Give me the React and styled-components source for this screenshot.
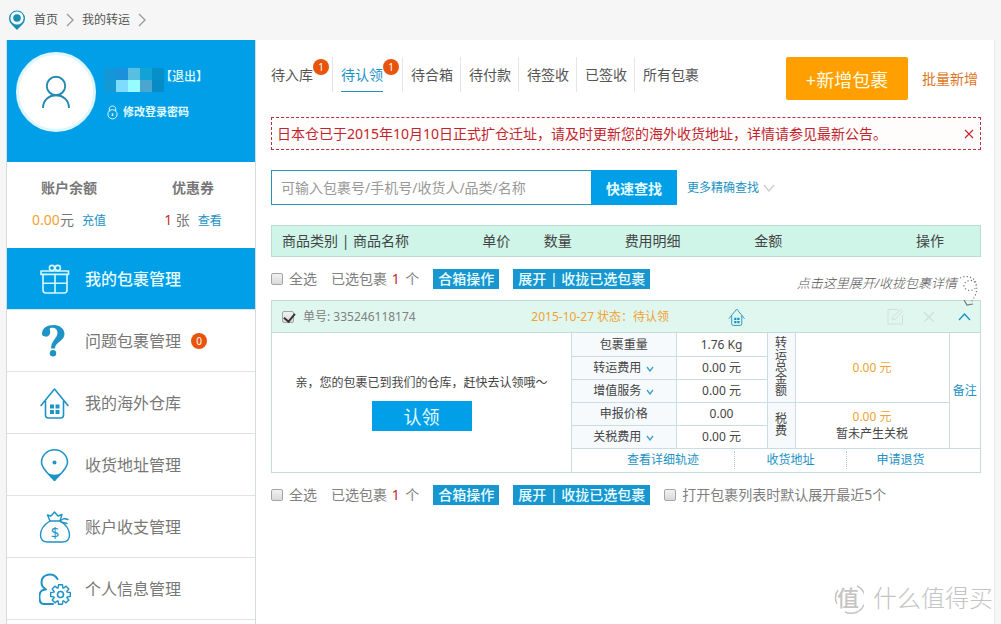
import React, { useState } from 'react';
import styled, { createGlobalStyle, css } from 'styled-components';

const GlobalStyle = createGlobalStyle`
    * {
        box-sizing: border-box;
    }
    body {
        margin: 0;
        background: #f6f6f6;
        color: #444;
        font-family: "Noto Sans", "Noto Sans CJK SC", sans-serif;
        font-size: 14px;
        line-height: 20px;
    }
    button, input {
        font-family: inherit;
        margin: 0;
    }
    a {
        text-decoration: none;
        color: inherit;
    }
    table {
        border-collapse: collapse;
        table-layout: fixed;
        width: 100%;
    }
`;

const Page = styled.div`
    min-height: 100vh;
    display: flex;
    flex-direction: column;
    padding: 0 6px;
`;

const Breadcrumb = styled.nav`
    height: 40px;
    display: flex;
    align-items: center;
    gap: 8px;
    font-size: 12px;
    color: #555;
    padding-left: 2px;
`;

const Columns = styled.div`
    flex: 1;
    display: flex;
`;

const Sidebar = styled.aside`
    flex: 0 0 250px;
    background: white;
    border: 1px solid #d5dadd;
    border-top: none;
    border-bottom: none;
`;

const Profile = styled.div`
    height: 122px;
    background: #019fe8;
    color: #e2fbff;
    display: flex;
    align-items: flex-start;
    gap: 8px;
    padding: 12px 9px;
`;

const Avatar = styled.div`
    flex: none;
    width: 80px;
    height: 80px;
    border-radius: 50%;
    border: 3px solid #ddf6fd;
    background: white;
    display: flex;
    align-items: center;
    justify-content: center;
`;

const ProfileInfo = styled.div`
    padding-top: 16px;
    font-size: 12px;
    font-weight: 500;
    white-space: nowrap;
    .name {
        display: flex;
        align-items: center;
        height: 24px;
    }
    .password {
        display: flex;
        align-items: center;
        gap: 5px;
        margin-top: 10px;
        padding-left: 3px;
        font-size: 11px;
        font-weight: bold;
    }
    .name a {
        margin-left: -4px;
        margin-top: -6px;
    }
`;

const Account = styled.div`
    height: 86px;
    display: grid;
    grid-template-columns: 1fr 1fr;
    padding-top: 16px;
    text-align: center;
    color: #777;
    h3 {
        margin: 0 0 12px;
        font-size: 14px;
        line-height: 20px;
    }
    a {
        margin-left: 8px;
        font-size: 12px;
        color: #1b92c4;
    }
`;

const Money = styled.span`
    color: #f0a232;
`;

const Red = styled.span`
    color: #c42a2a;
`;

const MenuItem = styled.a`
    height: 62px;
    display: flex;
    align-items: center;
    padding-left: 32px;
    font-size: 16px;
    color: #777;
    border-bottom: 1px solid #dfe3e5;
    svg {
        width: 32px;
        height: 32px;
        margin-right: 14px;
        color: #1e93c6;
    }
    ${({ $active }) => $active && css`
        background: #019fe8;
        color: #e6fcff;
        font-weight: 500;
        svg {
            color: #d8f8ff;
        }
    `}
`;

const Badge = styled.span`
    width: 16px;
    height: 16px;
    border-radius: 50%;
    background: #e8540c;
    color: white;
    font-size: 10px;
    line-height: 16px;
    font-weight: 400;
    text-align: center;
`;

const MenuBadge = styled(Badge)`
    margin-left: 10px;
`;

const Main = styled.main`
    flex: 1;
    min-width: 0;
    background: white;
    border-right: 1px solid #ececec;
    padding: 17px 13px 0 15px;
`;

const TopBar = styled.div`
    display: flex;
    align-items: flex-start;
    justify-content: space-between;
    height: 60px;
`;

const Tabs = styled.nav`
    display: flex;
`;

const Tab = styled.a`
    position: relative;
    height: 35px;
    padding: 0 7px 0 8px;
    border-right: 1px solid #e3e6e8;
    white-space: nowrap;
    color: #555;
    span.text {
        display: block;
        height: 35px;
        line-height: 36px;
        border-bottom: 1px solid transparent;
    }
    &:first-child {
        padding-left: 0;
    }
    &:last-child {
        border-right: none;
    }
    ${({ $count }) => $count && css`
        padding-right: 19px;
    `}
    ${({ $active }) => $active && css`
        color: #1b92c4;
        span.text {
            border-color: #1b92c4;
        }
    `}
    ${Badge} {
        position: absolute;
        top: 2px;
        right: 3px;
    }
`;

const AddArea = styled.div`
    display: flex;
    align-items: center;
    gap: 14px;
    padding-right: 3px;
    white-space: nowrap;
    a {
        color: #dd7526;
    }
`;

const AddButton = styled.button`
    width: 122px;
    height: 43px;
    padding: 0;
    border: none;
    border-radius: 2px;
    background: #ff9f00;
    color: #fffbe0;
    font-size: 18px;
    cursor: pointer;
`;

const Notice = styled.div`
    height: 33px;
    display: flex;
    align-items: center;
    justify-content: space-between;
    padding: 0 6px 0 5px;
    border: 1px dashed #b8323e;
    background: #fffcfc;
    color: #c1242c;
    button {
        display: flex;
        padding: 0;
        border: none;
        background: none;
        color: inherit;
        cursor: pointer;
    }
`;

const Search = styled.form`
    display: flex;
    align-items: center;
    margin: 20px 0;
    a {
        display: flex;
        align-items: center;
        gap: 4px;
        margin-left: 10px;
        font-size: 12px;
        color: #1b92c4;
    }
`;

const SearchInput = styled.input`
    flex: 0 1 320px;
    min-width: 0;
    height: 35px;
    padding: 0 9px;
    border: 1px solid #2b92b8;
    border-right: none;
    outline: none;
    background: white;
    font-size: 14px;
    &::placeholder {
        color: #999;
        opacity: 1;
    }
`;

const SearchButton = styled.button`
    width: 86px;
    height: 35px;
    padding: 0;
    border: none;
    background: #019fe8;
    color: #e6fcff;
    font-size: 14px;
    font-weight: bold;
    cursor: pointer;
`;

const HeadTable = styled.table`
    border: 1px solid #b9ddd4;
    background: #cff5e9;
    th {
        height: 31px;
        padding: 0 0 0 10px;
        font-weight: 400;
        text-align: left;
        white-space: nowrap;
    }
`;

const SelectRow = styled.div`
    display: flex;
    align-items: center;
    height: 20px;
    margin: 12px 0 11px;
    color: #808080;
    white-space: nowrap;
`;

const CheckLabel = styled.label`
    display: flex;
    align-items: center;
    gap: 6px;
    font-size: ${({ $small }) => ($small ? 12 : 14)}px;
    color: #808080;
`;

const Check = styled.input.attrs({ type: 'checkbox' })`
    appearance: none;
    flex: none;
    width: 12px;
    height: 12px;
    border: 1px solid #a5a5a5;
    border-radius: 2px;
    background: linear-gradient(#f2f2f2, #d9d9d9);
    &:checked::before {
        content: "";
        display: block;
        width: 5px;
        height: 9px;
        margin: -1px 0 0 3px;
        border: solid #333;
        border-width: 0 2px 2px 0;
        transform: rotate(40deg);
    }
`;

const Selected = styled.span`
    margin: 0 14px;
    ${Red} {
        margin: 0 2px 0 1px;
    }
`;

const SmallButton = styled.button`
    height: 20px;
    padding: 0 5px;
    margin-right: 14px;
    border: none;
    background: #1796d0;
    color: #e6fcff;
    font-size: 14px;
    line-height: 20px;
    font-weight: 500;
    cursor: pointer;
`;

const Hint = styled.div`
    position: relative;
    margin-left: auto;
    padding: 8px 24px 0 0;
    font-size: 13px;
    font-weight: 300;
    font-style: italic;
    color: #555;
    svg {
        position: absolute;
        top: 10px;
        right: 0;
    }
`;

const Card = styled.section`
    border: 1px solid #c3dcd9;
`;

const CardHead = styled.header`
    height: 32px;
    display: grid;
    grid-template-columns: 240px 206px 1fr auto;
    align-items: center;
    padding: 0 9px 0 10px;
    background: #e0f7ef;
    border-bottom: 1px solid #c3dcd9;
    font-size: 12px;
    ${CheckLabel} {
        gap: 9px;
    }
`;

const Actions = styled.div`
    display: flex;
    align-items: center;
    button {
        display: flex;
        padding: 0;
        border: none;
        background: none;
        color: #cfe0db;
        cursor: pointer;
    }
    button + button {
        margin-left: 19px;
    }
    button:last-child {
        margin-left: 23px;
        color: #1b92c4;
    }
`;

const CardBody = styled.div`
    display: flex;
    font-size: 12px;
`;

const Claim = styled.div`
    flex: 1;
    display: flex;
    flex-direction: column;
    align-items: center;
    justify-content: center;
    gap: 8px;
    p {
        margin: 0;
    }
    button {
        width: 100px;
        height: 30px;
        padding: 0;
        border: none;
        background: #019fe8;
        color: #e6fcff;
        font-size: 18px;
        cursor: pointer;
    }
`;

const Fees = styled.div`
    flex: 0 0 408px;
    border-left: 1px solid #c9dde3;
`;

const FeeTable = styled.table`
    line-height: 17px;
    text-align: center;
    th, td {
        height: 23px;
        padding: 0;
        font-weight: 400;
        border: 1px solid #c9dde3;
    }
    th {
        background: #f6fafd;
    }
    tr:first-child > * {
        border-top: none;
    }
    th:first-child {
        border-left: none;
    }
    td:last-child[rowspan="5"] {
        border-right: none;
    }
    a {
        color: #1b92c4;
    }
    th svg {
        margin-left: 5px;
    }
    th.vertical {
        padding: 0 7px;
        line-height: 12px;
    }
`;

const Links = styled.div`
    display: grid;
    grid-template-columns: 142fr 112fr 108fr 26fr;
    align-items: center;
    height: 23px;
    padding-left: 20px;
    text-align: center;
    a {
        color: #1b92c4;
        line-height: 18px;
    }
    a + a {
        border-left: 1px dotted #b5c5cb;
    }
`;

const Watermark = styled.div`
    position: absolute;
    right: 8px;
    bottom: 8px;
    display: flex;
    align-items: center;
    gap: 9px;
    font-size: 24px;
    line-height: 36px;
    font-weight: 300;
    color: #c4c4c4;
    pointer-events: none;
`;

const line = { fill: 'none', stroke: 'currentColor', strokeWidth: 1.6, strokeLinecap: 'round', strokeLinejoin: 'round' };

const Chevron = ({ width, height, color = 'currentColor', dir = 'down' }) => {
    const d = {
        down: `M1 1 L${width / 2} ${height - 1} L${width - 1} 1`,
        up: `M1 ${height - 1} L${width / 2} 1 L${width - 1} ${height - 1}`,
        right: `M1 1 L${width - 1} ${height / 2} L1 ${height - 1}`,
    };
    return (
        <svg width={width} height={height} aria-hidden="true">
            <path d={d[dir]} fill="none" stroke={color} strokeWidth="1.3"/>
        </svg>
    );
};

const Cross = ({ size }) => (
    <svg width={size} height={size} viewBox="0 0 10 10" aria-hidden="true">
        <path d="M1 1 L9 9 M9 1 L1 9" stroke="currentColor" strokeWidth="1.1"/>
    </svg>
);

const CrumbPin = () => (
    <svg width="18" height="22" viewBox="0 0 18 22" aria-hidden="true">
        <path d="M9 21 L3.6 15.4 A8 8 0 1 1 14.4 15.4 Z" fill="#1c8cb5"/>
        <circle cx="9" cy="9" r="6.6" fill="#effcff"/>
        <circle cx="9" cy="9" r="3.8" fill="#1c8cb5"/>
    </svg>
);

const Person = () => (
    <svg width="30" height="34" viewBox="0 0 30 34" aria-hidden="true">
        <g fill="none" stroke="#2389b0" strokeWidth="1.9">
            <circle cx="15" cy="11" r="9.2"/>
            <path d="M2 33 C2 16 28 16 28 33"/>
        </g>
    </svg>
);

const Lock = () => (
    <svg width="11" height="15" viewBox="0 0 11 15" aria-hidden="true">
        <g fill="none" stroke="currentColor">
            <circle cx="5.5" cy="9.3" r="4.6"/>
            <path d="M2.3 6 V3.6 C2.3 .2 8.7 .2 8.7 3.6 V6"/>
            <path d="M5.5 8.3 V11" strokeWidth="1.5"/>
        </g>
    </svg>
);

const mosaic = [
    ['#1497d6', '#1b90dc', '#58bfe2', '#10a3d3', '#078fca'],
    ['#119ad4', '#7fdcff', '#96fcff', '#4aa6d0', '#078bc6'],
];

const MaskedName = () => (
    <svg width="60" height="24" aria-label="用户名">
        {mosaic.map((row, y) => row.map((fill, x) => (
            <rect key={`${x}-${y}`} x={x * 12} y={y * 12} width="12" height="12" fill={fill}/>
        )))}
    </svg>
);

const Gift = () => (
    <svg viewBox="0 0 32 32" aria-hidden="true">
        <g {...line}>
            <rect x="2" y="8" width="27.5" height="3.4"/>
            <path d="M4 11.5 V27 Q4 30 7 30 H25 Q28 30 28 27 V11.5 M16 11.5 V30 M4 20.3 H28"/>
            <circle cx="13" cy="5" r="2.6"/>
            <circle cx="18.8" cy="5" r="2.6"/>
        </g>
    </svg>
);

const Question = () => (
    <svg viewBox="0 0 32 32" aria-hidden="true">
        <path d="M3 9 C3 3 8 0 15 0 C21 0 25.500 4 25.500 9 C25.500 16 16 17 16 23.500 H12 C12 15.500 18.500 13 18.500 8 C18.500 4.500 16 2.600 12.500 2.800 C10.500 3 10.600 4 11 5.500 C12 9 9.500 12 6.500 11.600 C4.300 11.400 3 10.500 3 9 Z" fill="currentColor"/>
        <circle cx="14" cy="28.200" r="3.200" fill="currentColor"/>
    </svg>
);

const House = (props) => (
    <svg viewBox="0 0 32 32" aria-hidden="true" {...props}>
        <g {...line}>
            <path d="M2 18.500 L15.500 2 L29 18.500 M6.500 14 V28 Q6.500 31 9.500 31 H21.500 Q24.500 31 24.500 28 V14"/>
        </g>
        <path d="M11 17.500 h4 v4 h-4z M16.500 17.500 h4 v4 h-4z M11 23 h4 v4 h-4z M16.500 23 h4 v4 h-4z" fill="currentColor"/>
    </svg>
);

const AddressPin = () => (
    <svg viewBox="0 0 32 32" aria-hidden="true">
        <path d="M15.500 31.500 C12 27 2.500 20 2.500 13.500 A13 12.700 0 0 1 28.500 13.500 C28.500 20 19 27 15.500 31.500 Z" {...line}/>
        <path d="M8.500 24 Q15.500 27.500 22.500 24 L15.500 32 Z" fill="currentColor"/>
        <circle cx="15.500" cy="13.500" r="2" fill="currentColor"/>
    </svg>
);

const MoneyBag = () => (
    <svg viewBox="0 0 32 32" aria-hidden="true">
        <g {...line} strokeWidth="1.400">
            <path d="M11 10 C6 13 1.500 18 1.500 24 C1.500 29 5 31 9 31 H23 C28 31 30.500 28 30.500 24 C30.500 18 26 13 21 10 Z"/>
            <path d="M11 10 L8.500 4 L12 5 L15.500 1 L19 5 L23 3.500 L21 10 M21 10 L25 7.500 L29 8.500 M22 11 L28 12.500"/>
        </g>
        <text x="16" y="26.500" textAnchor="middle" fontSize="15" fill="currentColor">$</text>
    </svg>
);

const gearPath = (cx, cy, teeth) => {
    const points = [];
    const offsets = [[-0.34, 7], [-0.2, 10], [0.2, 10], [0.34, 7]];
    for (let i = 0; i < teeth; i++) {
        const mid = (Math.PI * 2 * i) / teeth - Math.PI / 2;
        offsets.forEach(([a, r]) => {
            points.push(`${(cx + Math.cos(mid + a) * r).toFixed(2)} ${(cy + Math.sin(mid + a) * r).toFixed(2)}`);
        });
    }
    return `M${points.join(' L')} Z`;
};

const UserGear = () => (
    <svg viewBox="0 0 32 32" aria-hidden="true">
        <g {...line}>
            <path d="M18.500 6 C14 -1.500 2.500 1 2.500 9.500 C2.500 12.500 4.500 15 7 16.500 C0 16.500 -.2 23 1 28 C1.500 30.500 3 31 5 31 H14" strokeWidth="2"/>
            <path d={gearPath(21.5, 21.5, 8)} strokeWidth="1.400"/>
            <circle cx="21.500" cy="21.500" r="3"/>
        </g>
    </svg>
);

const Edit = () => (
    <svg width="17" height="17" viewBox="0 0 17 17" aria-hidden="true">
        <path d="M15.500 7 V16 H1 V1.500 H11 M5 12 L6 8.500 L13.500 1.500 L15.500 3.500 L8.500 11 Z" fill="none" stroke="currentColor"/>
    </svg>
);

const Swirl = () => (
    <svg width="22" height="34" viewBox="0 0 22 34" aria-hidden="true">
        <g fill="none" stroke="#777" strokeWidth="1.200">
            <path d="M1 3 C10 -1 18 4 17 11 C16 17 6 17 5 11 C5 5 14 3 17 9 C19 14 17 22 11 28" strokeDasharray="1.200 2.200"/>
            <path d="M5 25 L8 30 L14 29"/>
        </g>
    </svg>
);

const menu = [
    { name: '我的包裹管理', Icon: Gift },
    { name: '问题包裹管理', Icon: Question, count: '0' },
    { name: '我的海外仓库', Icon: House },
    { name: '收货地址管理', Icon: AddressPin },
    { name: '账户收支管理', Icon: MoneyBag },
    { name: '个人信息管理', Icon: UserGear },
];

const tabs = [
    { name: '待入库', count: 1 },
    { name: '待认领', count: 1 },
    { name: '待合箱' },
    { name: '待付款' },
    { name: '待签收' },
    { name: '已签收' },
    { name: '所有包裹' },
];

const headColumns = [
    ['商品类别 | 商品名称', '28.3%'],
    ['单价', '8.7%'],
    ['数量', '11.4%'],
    ['费用明细', '18.3%'],
    ['金额', '22.8%'],
    ['操作', 'auto'],
];

const SelectBar = ({ children }) => (
    <SelectRow>
        <CheckLabel><Check/>全选</CheckLabel>
        <Selected>已选包裹 <Red>1</Red> 个</Selected>
        <SmallButton type="button">合箱操作</SmallButton>
        <SmallButton type="button">展开 | 收拢已选包裹</SmallButton>
        {children}
    </SelectRow>
);

const FeeName = ({ children, open }) => (
    <th scope="row">
        {children}
        {open && <Chevron width={8} height={6} color="#3b9fc0"/>}
    </th>
);

const PackageCard = () => {
    const [checked, setChecked] = useState(true);
    return (
        <Card>
            <CardHead>
                <CheckLabel $small>
                    <Check checked={checked} onChange={() => setChecked(!checked)}/>
                    单号: 335246118174
                </CheckLabel>
                <Money>&nbsp;&nbsp;&nbsp;2015-10-27 状态：待认领</Money>
                <House width="18" height="18" color="#1b92c4"/>
                <Actions>
                    <button type="button" aria-label="编辑"><Edit/></button>
                    <button type="button" aria-label="删除"><Cross size={12}/></button>
                    <button type="button" aria-label="收拢"><Chevron width={13} height={8} dir="up"/></button>
                </Actions>
            </CardHead>
            <CardBody>
                <Claim>
                    <p>亲，您的包裹已到我们的仓库，赶快去认领哦～</p>
                    <button type="button">认领</button>
                </Claim>
                <Fees>
                    <FeeTable>
                        <colgroup>
                            <col width="104"/>
                            <col width="91"/>
                            <col width="28"/>
                            <col width="154"/>
                            <col width="31"/>
                        </colgroup>
                        <tbody>
                            <tr>
                                <FeeName>包裹重量</FeeName>
                                <td>1.76 Kg</td>
                                <th className="vertical" rowSpan={3}>转运总金额</th>
                                <td rowSpan={3}><Money>0.00 元</Money></td>
                                <td rowSpan={5}><a href="#note">备注</a></td>
                            </tr>
                            <tr>
                                <FeeName open>转运费用</FeeName>
                                <td>0.00 元</td>
                            </tr>
                            <tr>
                                <FeeName open>增值服务</FeeName>
                                <td>0.00 元</td>
                            </tr>
                            <tr>
                                <FeeName>申报价格</FeeName>
                                <td>0.00</td>
                                <th className="vertical" rowSpan={2}>税费</th>
                                <td rowSpan={2}><Money>0.00 元</Money><br/>暂未产生关税</td>
                            </tr>
                            <tr>
                                <FeeName open>关税费用</FeeName>
                                <td>0.00 元</td>
                            </tr>
                        </tbody>
                    </FeeTable>
                    <Links>
                        <a href="#track">查看详细轨迹</a>
                        <a href="#address">收货地址</a>
                        <a href="#return">申请退货</a>
                    </Links>
                </Fees>
            </CardBody>
        </Card>
    );
};

const App = () => {
    return (
        <Page lang="zh-CN">
            <GlobalStyle/>
            <Breadcrumb>
                <CrumbPin/>
                <a href="#home">首页</a>
                <Chevron width={8} height={14} color="#999" dir="right"/>
                <a href="#transfer">我的转运</a>
                <Chevron width={8} height={14} color="#999" dir="right"/>
            </Breadcrumb>
            <Columns>
                <Sidebar>
                    <Profile>
                        <Avatar><Person/></Avatar>
                        <ProfileInfo>
                            <div className="name">
                                <MaskedName/>
                                <a href="#logout">【退出】</a>
                            </div>
                            <a className="password" href="#password"><Lock/>修改登录密码</a>
                        </ProfileInfo>
                    </Profile>
                    <Account>
                        <div>
                            <h3>账户余额</h3>
                            <Money>0.00</Money>元<a href="#recharge">充值</a>
                        </div>
                        <div>
                            <h3>优惠券</h3>
                            <Red>1</Red> 张<a href="#coupon">查看</a>
                        </div>
                    </Account>
                    {menu.map(({ name, Icon, count }, idx) => (
                        <MenuItem key={name} href={`#menu${idx}`} $active={idx === 0}>
                            <Icon/>
                            {name}
                            {count && <MenuBadge>{count}</MenuBadge>}
                        </MenuItem>
                    ))}
                </Sidebar>
                <Main>
                    <TopBar>
                        <Tabs>
                            {tabs.map(({ name, count }, idx) => (
                                <Tab key={name} href={`#tab${idx}`} $count={count} $active={idx === 1}>
                                    <span className="text">{name}</span>
                                    {count && <Badge>{count}</Badge>}
                                </Tab>
                            ))}
                        </Tabs>
                        <AddArea>
                            <AddButton type="button">+新增包裹</AddButton>
                            <a href="#batch">批量新增</a>
                        </AddArea>
                    </TopBar>
                    <Notice>
                        日本仓已于2015年10月10日正式扩仓迁址，请及时更新您的海外收货地址，详情请参见最新公告。
                        <button type="button" aria-label="关闭"><Cross size={10}/></button>
                    </Notice>
                    <Search onSubmit={(e) => e.preventDefault()}>
                        <SearchInput type="text" aria-label="查找包裹" placeholder="可输入包裹号/手机号/收货人/品类/名称"/>
                        <SearchButton type="submit">快速查找</SearchButton>
                        <a href="#more">更多精确查找<Chevron width={12} height={8} color="#ccc"/></a>
                    </Search>
                    <HeadTable>
                        <colgroup>
                            {headColumns.map(([name, width]) => <col key={name} width={width}/>)}
                        </colgroup>
                        <thead>
                            <tr>
                                {headColumns.map(([name]) => <th key={name} scope="col">{name}</th>)}
                            </tr>
                        </thead>
                    </HeadTable>
                    <SelectBar>
                        <Hint>点击这里展开/收拢包裹详情<Swirl/></Hint>
                    </SelectBar>
                    <PackageCard/>
                    <SelectBar>
                        <CheckLabel><Check/>打开包裹列表时默认展开最近5个</CheckLabel>
                    </SelectBar>
                </Main>
            </Columns>
            <Watermark>
                <svg width="30" height="32" viewBox="0 0 30 32" aria-hidden="true">
                    <path d="M23 4 A14 14 0 0 1 11 30 M4 8 A14 14 0 0 0 3 22" fill="none" stroke="currentColor" strokeWidth="1.500"/>
                    <text x="14" y="24" textAnchor="middle" fontSize="22" fontWeight="500" fill="currentColor">值</text>
                </svg>
                什么值得买
            </Watermark>
        </Page>
    );
};

export default App;
